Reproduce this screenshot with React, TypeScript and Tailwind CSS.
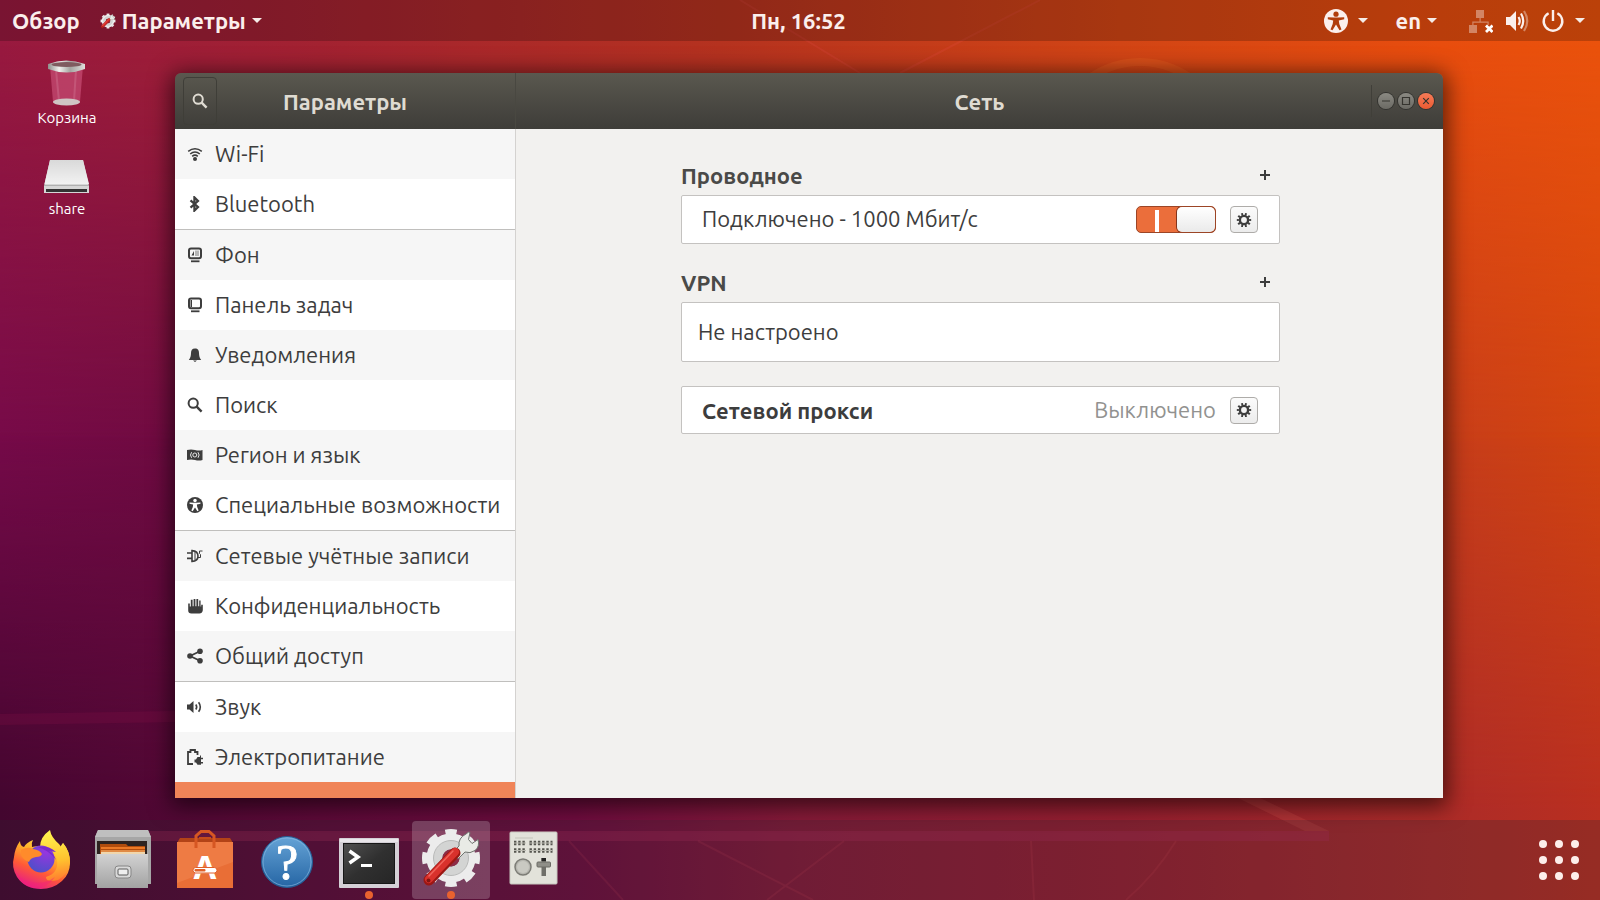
import { useState, type ReactNode } from "react";

type SidebarItem = {
  label: string;
  icon: ReactNode;
  shaded?: boolean;
  divider?: boolean;
};

function Glyph({ children }: { children: ReactNode }) {
  return (
    <svg viewBox="0 0 16 16" className="size-4 shrink-0" fill="currentColor" aria-hidden="true">
      {children}
    </svg>
  );
}

function SearchIcon() {
  return (
    <Glyph>
      <circle cx="6.2" cy="6.2" r="4.6" fill="none" stroke="currentColor" strokeWidth="2" />
      <path d="M9.4 9.4 14.6 14.6" stroke="currentColor" strokeWidth="2.4" />
    </Glyph>
  );
}

function Caret() {
  return (
    <svg viewBox="0 0 10 5" className="h-[5px] w-[10px] shrink-0" fill="#f5ece8" aria-hidden="true">
      <path d="M0 0h10L5 5z" />
    </svg>
  );
}

function GearIcon() {
  return (
    <Glyph>
      <circle cx="8" cy="8" r="4.1" fill="none" stroke="currentColor" strokeWidth="2.4" />
      <circle cx="8" cy="8" r="6" fill="none" stroke="currentColor" strokeWidth="2.4" pathLength="100" strokeDasharray="5 5" strokeDashoffset="2.5" />
    </Glyph>
  );
}

function ScreenFrame({ children }: { children: ReactNode }) {
  return (
    <Glyph>
      <rect x="2" y="1.5" width="12" height="9.8" rx="2" fill="none" stroke="currentColor" strokeWidth="2" />
      <rect x="4" y="13.4" width="8.5" height="1.8" />
      {children}
    </Glyph>
  );
}

function AccessIcon({ size, cut }: { size: string; cut: string }) {
  return (
    <svg viewBox="0 0 24 24" className={size} aria-hidden="true">
      <circle cx="12" cy="12" r="12" fill="currentColor" />
      <g className={cut}>
        <circle cx="12" cy="5.2" r="2.6" />
        <path d="M3.8 8.2 10 8.6h4l6.2-.4v2L14.8 11.4l.5 3.6 2.2 5.4-2 .8L12 15.6 8.5 21.2l-2-.8L8.7 15l.5-3.6-5.4-1.2z" />
      </g>
    </svg>
  );
}

const items: SidebarItem[] = [
  {
    label: "Wi-Fi",
    shaded: true,
    icon: (
      <Glyph>
        <g fill="none" stroke="currentColor" strokeWidth="1.6">
          <path d="M1.2 5.4Q8 .2 14.8 5.4" />
          <path d="M3.2 8Q8 4 12.8 8" />
          <path d="M5.2 10.4Q8 8 10.8 10.4" />
        </g>
        <circle cx="8" cy="13" r="2" />
      </Glyph>
    ),
  },
  {
    label: "Bluetooth",
    divider: true,
    icon: (
      <Glyph>
        <path d="M3.5 4.4 11 11 7.4 14.6V1.4L11 5 3.5 11.6" fill="none" stroke="currentColor" strokeWidth="2.2" />
      </Glyph>
    ),
  },
  {
    label: "Фон",
    shaded: true,
    icon: (
      <ScreenFrame>
        <path d="M4.5 8.5 7 4v4.5z" />
        <path d="M8 3.5h4V9H8z" opacity=".35" />
      </ScreenFrame>
    ),
  },
  {
    label: "Панель задач",
    icon: (
      <ScreenFrame>
        <rect x="3.5" y="3" width="1.5" height="7" />
      </ScreenFrame>
    ),
  },
  {
    label: "Уведомления",
    shaded: true,
    icon: (
      <Glyph>
        <path d="M8 1.5c3 0 4 2 4 4.5 0 3 .7 5 2.2 7H1.8C3.3 11 4 9 4 6c0-2.5 1-4.500 4-4.500zM6 13.500h4L8 15z" />
      </Glyph>
    ),
  },
  { label: "Поиск", icon: <SearchIcon /> },
  {
    label: "Регион и язык",
    shaded: true,
    icon: (
      <Glyph>
        <path d="M0 3q4-1 8 0t7.5 0v10q-3.5 1-7.5 0t-8 0z" />
        <g fill="none" stroke="#f7f7f7" strokeWidth=".9">
          <circle cx="7.8" cy="8" r="2" />
          <path d="M4.6 5.2q-2.2 2.8 0 5.6M11 5.2q2.2 2.8 0 5.6" />
        </g>
      </Glyph>
    ),
  },
  {
    label: "Специальные возможности",
    divider: true,
    icon: <AccessIcon size="size-4 shrink-0" cut="fill-white" />,
  },
  {
    label: "Сетевые учётные записи",
    shaded: true,
    icon: (
      <Glyph>
        <path d="M0 5h5M0 10.4h5" stroke="currentColor" strokeWidth="1.6" />
        <path d="M5 1.8v12.4M5 2.6q6 .4 6 5.4t-6 5.4" fill="none" stroke="currentColor" strokeWidth="1.6" />
        <path d="M8 4v8" stroke="currentColor" strokeWidth="1" />
        <path d="M11 9.5h2.5V6.500l-1-1V3h3" fill="none" stroke="currentColor" strokeWidth="1" />
      </Glyph>
    ),
  },
  {
    label: "Конфиденциальность",
    icon: (
      <Glyph>
        <path d="M1.2 5.4h1.6v3.2h1V1.8h1.8v6.4h1V1h1.8v7.2h1V1h1.800v7.2h1V2.4h1.400v6.2h.6V6.8h1.600v5.4q-.6 3.2-3.4 3.2H4.4q-3.200 0-3.200-3z" />
      </Glyph>
    ),
  },
  {
    label: "Общий доступ",
    shaded: true,
    divider: true,
    icon: (
      <Glyph>
        <path d="M13 3.2 3 8l10 4.8" fill="none" stroke="currentColor" strokeWidth="1.8" />
        <circle cx="3" cy="8" r="2.8" />
        <circle cx="13" cy="3.2" r="2.8" />
        <circle cx="13" cy="12.8" r="2.8" />
      </Glyph>
    ),
  },
  {
    label: "Звук",
    icon: (
      <Glyph>
        <path d="M0 5.5h2.5L6.5 2v12l-4-3.5H0z" />
        <path d="M8.8 5.5q1.8 2.5 0 5M11.6 3.2q3.4 4.8 0 9.6" fill="none" stroke="currentColor" strokeWidth="1.6" />
      </Glyph>
    ),
  },
  {
    label: "Электропитание",
    shaded: true,
    icon: (
      <Glyph>
        <path d="M6 15H1V3h2.500V1H8v2h2.500v3" fill="none" stroke="currentColor" strokeWidth="1.8" />
        <path d="M7.500 10.500H9L10.500 8H13V6.500h1v2.300h2v1.500h-2V13h2v1.500h-2v1.300h-3.500L9 13.500H7.500z" />
      </Glyph>
    ),
  },
];

function Wallpaper() {
  return (
    <svg viewBox="0 0 1600 900" preserveAspectRatio="none" className="absolute inset-0 -z-10 size-full" aria-hidden="true">
      <defs>
        <linearGradient id="skyTop">
          <stop offset="0" stopColor="#98193f" />
          <stop offset=".2" stopColor="#a32231" />
          <stop offset=".45" stopColor="#b5321f" />
          <stop offset=".7" stopColor="#d24515" />
          <stop offset=".9" stopColor="#e84d0e" />
          <stop offset="1" stopColor="#ea520c" />
        </linearGradient>
        <linearGradient id="skyMid">
          <stop offset="0" stopColor="#760a49" />
          <stop offset=".12" stopColor="#6e0b40" />
          <stop offset=".9" stopColor="#c63d1b" />
          <stop offset="1" stopColor="#d2440f" />
        </linearGradient>
        <linearGradient id="skyLow">
          <stop offset="0" stopColor="#43062f" />
          <stop offset=".2" stopColor="#5d0938" />
          <stop offset=".36" stopColor="#6e0c3e" />
          <stop offset=".5" stopColor="#861a38" />
          <stop offset=".7" stopColor="#981f30" />
          <stop offset=".87" stopColor="#a92a2a" />
          <stop offset="1" stopColor="#b92f20" />
        </linearGradient>
        <linearGradient id="fadeMid" x2="0" y2="1">
          <stop offset=".05" stopColor="#000" />
          <stop offset=".5" stopColor="#fff" />
        </linearGradient>
        <linearGradient id="fadeLow" x2="0" y2="1">
          <stop offset=".48" stopColor="#000" />
          <stop offset=".9" stopColor="#fff" />
        </linearGradient>
        <mask id="maskMid"><rect width="1600" height="900" fill="url(#fadeMid)" /></mask>
        <mask id="maskLow"><rect width="1600" height="900" fill="url(#fadeLow)" /></mask>
      </defs>
      <rect width="1600" height="900" fill="url(#skyTop)" />
      <rect width="1600" height="900" fill="url(#skyMid)" mask="url(#maskMid)" />
      <rect width="1600" height="900" fill="url(#skyLow)" mask="url(#maskLow)" />
      <path d="M0 714 175 711V722L0 725z" fill="#8d1048" opacity=".22" />
      <path d="M120 831H1329V841H120z" fill="#b82a5e" opacity=".32" />
      <path d="M1238 798h22l69 33h-24z" fill="#d0504c" opacity=".3" />
      <circle cx="1140" cy="150" r="88" fill="none" stroke="#f0702a" strokeWidth="8" opacity=".22" />
      <path d="M740 0 860 73M1040 0 900 73M569 841 623 900M698 841 813 900M844 841 767 900M1031 841 1034 900M1176 841Q1155 875 1126 900" fill="none" stroke="#ff5a6a" strokeWidth="2" opacity=".12" />
    </svg>
  );
}

function SettingsGear() {
  return (
    <>
      <circle cx="39" cy="37" r="18" fill="none" stroke="#ececec" strokeWidth="13" />
      <circle cx="39" cy="37" r="26" fill="none" stroke="#ececec" strokeWidth="6" pathLength="80" strokeDasharray="5.6 4.4" strokeDashoffset="2.8" />
      <circle cx="39" cy="37" r="13" fill="none" stroke="#d3d4d3" strokeWidth="9" />
      <circle cx="39" cy="37" r="17.5" fill="none" stroke="#b9bab9" strokeWidth="1" />
      <circle cx="39" cy="37" r="8.5" fill="#8d2c45" />
      <path d="M54 13q3-3 4-1.5l-1.5 7 3.5 4 6-4q2 7-3 11-5 3.5-10 1.500l-7 7-6-6 7-7q-1-8 7-12z" fill="#e9ebe6" stroke="#707570" strokeWidth="1" />
      <path d="M43 32 17 59" stroke="#9c1713" strokeWidth="11" strokeLinecap="round" />
      <path d="M43 31 17 58" stroke="#d9312c" strokeWidth="8" strokeLinecap="round" />
      <path d="M41 30 17 55" stroke="#f0635b" strokeWidth="1.5" strokeLinecap="round" />
      <circle cx="16.5" cy="59.5" r="2" fill="#7f1512" />
    </>
  );
}

function FirefoxArt() {
  return (
    <>
      <defs>
        <linearGradient id="foxBody" x1=".8" y1="0" x2=".3" y2="1">
          <stop offset="0" stopColor="#fff14a" />
          <stop offset=".35" stopColor="#ffb02a" />
          <stop offset=".65" stopColor="#ff5a36" />
          <stop offset="1" stopColor="#e5188c" />
        </linearGradient>
        <linearGradient id="foxFlame" x1=".5" y1="0" x2=".6" y2="1">
          <stop offset="0" stopColor="#fff44f" />
          <stop offset=".6" stopColor="#ffc22e" />
          <stop offset="1" stopColor="#ff7a30" />
        </linearGradient>
        <radialGradient id="foxGlobe" cx=".7" cy=".2" r=".9">
          <stop offset="0" stopColor="#9a35e0" />
          <stop offset="1" stopColor="#4b50c8" />
        </radialGradient>
      </defs>
      <path d="M18 20q0 5 4 6 2-4 9-7-2 3-1 7 6-2 12 1l16 0q1-3 3-5 7 8 7 19 0 12-8 19-9 8-21 8-16 0-24-12-6-10-3-20 1-9 6-16z" fill="url(#foxBody)" />
      <path d="M38 26Q38 16 48 9q1 7 9 14l3 4 1-5q7 9 7 20-2 11-12 17-12 3-12-3 13-4 11-17-3-12-17-13z" fill="url(#foxFlame)" />
      <circle cx="39" cy="38" r="13.5" fill="url(#foxGlobe)" />
      <path d="M36 26q10-2 18 5l-7-1q5 3 7 9-6-9-18-13z" fill="#7a2bcb" />
      <path d="M19 29q7-4 12-1 7 1 9 5-1 3-6 3-6 1-7 5-6-2-8-7z" fill="#ff8b2b" />
      <path d="M12 46q4 13 17 15 13 3 24-5-8 12-22 11-15-3-19-21z" fill="#f5217a" opacity=".45" />
    </>
  );
}

function FilesArt() {
  return (
    <>
      <defs>
        <linearGradient id="cabinet" x2="0" y2="1">
          <stop offset="0" stopColor="#d2d2d2" />
          <stop offset="1" stopColor="#a2a2a2" />
        </linearGradient>
      </defs>
      <path d="M14 9h50l3 7v47H11V16z" fill="#a6a6a6" />
      <path d="M14 9h50l3 7H11z" fill="#bfbfbf" />
      <rect x="13" y="20" width="50" height="16" fill="#2d2320" />
      <path d="M16 23h26l2 2h17v11H16z" fill="#b04c0d" />
      <rect x="17" y="26" width="44" height="2" fill="#ec7a26" />
      <rect x="17" y="29" width="44" height="2" fill="#e08a45" />
      <rect x="17" y="31" width="44" height="3" fill="#f0d6ac" />
      <path d="M13 33h51v34H13z" fill="url(#cabinet)" />
      <rect x="31" y="45" width="16" height="12" rx="3" fill="#d9d9d9" stroke="#868686" />
      <rect x="34" y="48" width="10" height="6" rx="1" fill="#eee" stroke="#5a5a5a" />
    </>
  );
}

function SoftwareArt() {
  return (
    <>
      <path d="M11 22 14 17H64l3 5z" fill="#b24317" />
      <path d="M11 21h56v46H11z" fill="#e96e36" />
      <path d="M11 21h56v20L11 62z" fill="#f2834f" opacity=".6" />
      <path d="M30 27V15l5-4.5h8L48 15v12" fill="none" stroke="#d65722" strokeWidth="3" />
      <path d="M33 17h12" stroke="#c54c1a" strokeWidth="2" />
      <text x="39" y="58" textAnchor="middle" fontSize="33" fontWeight="700" fill="#fff" className="font-['Noto_Sans',sans-serif]">A</text>
      <rect x="27" y="46.5" width="24" height="5.5" rx="2.7" fill="#fff" stroke="#e05f28" />
      <rect x="28.5" y="48" width="11" height="2.5" rx="1" fill="#e05f28" />
    </>
  );
}

function HelpArt() {
  return (
    <>
      <defs>
        <linearGradient id="helpBall" x2="0" y2="1">
          <stop offset="0" stopColor="#65a3d6" />
          <stop offset="1" stopColor="#2565a4" />
        </linearGradient>
      </defs>
      <circle cx="39" cy="41" r="25.5" fill="url(#helpBall)" stroke="#245b92" />
      <circle cx="39" cy="41" r="24" fill="none" stroke="#8dbde3" opacity=".6" />
      <text x="39" y="58" textAnchor="middle" fontSize="50" fill="#fff" stroke="#fff" className="font-['Liberation_Serif',serif]">?</text>
    </>
  );
}

function TerminalArt() {
  return (
    <>
      <defs>
        <linearGradient id="screenGlass" x2="1" y2="1">
          <stop offset="0" stopColor="#505050" />
          <stop offset=".5" stopColor="#303030" />
          <stop offset="1" stopColor="#262626" />
        </linearGradient>
      </defs>
      <rect x="9" y="17" width="60" height="50" rx="1" fill="#d4d0d6" />
      <rect x="10" y="18" width="58" height="3" fill="#e9e6ea" />
      <rect x="13.5" y="22.5" width="51" height="40" fill="url(#screenGlass)" stroke="#171717" />
      <path d="M19.5 30 28 36l-8.500 6" fill="none" stroke="#fff" strokeWidth="3.5" />
      <path d="M31 44.5h11" stroke="#fff" strokeWidth="3" />
    </>
  );
}

function TweaksArt() {
  return (
    <>
      <rect x="16" y="11" width="47" height="52" rx="1" fill="#e2e2da" stroke="#c7c7bf" />
      <path d="M21 17h18" stroke="#c4c4bb" strokeWidth="1" />
      <path d="M20 22h12M35.5 22h23M20 29.5h12M35.5 29.5h23" stroke="#55554f" strokeWidth="4.5" strokeDasharray="2.4 1.8" />
      <path d="M20 22h12M35.5 22h23M20 29.5h12M35.5 29.5h23" stroke="#b9b9b0" strokeWidth="1" />
      <circle cx="29" cy="46" r="8" fill="#b7b7b0" stroke="#7c7c76" strokeWidth="1.5" />
      <circle cx="29" cy="46" r="6" fill="#c9c9c2" />
      <rect x="47.5" y="37" width="4.5" height="18" fill="#6f6f69" />
      <rect x="47.5" y="37" width="4.5" height="3" fill="#222" />
      <rect x="43" y="41" width="13.5" height="5" rx="1" fill="#8f8f88" stroke="#6a6a64" />
    </>
  );
}

const dockApps = [
  { name: "Firefox", art: <FirefoxArt /> },
  { name: "Файлы", art: <FilesArt /> },
  { name: "Ubuntu Software", art: <SoftwareArt /> },
  { name: "Справка", art: <HelpArt /> },
  { name: "Терминал", art: <TerminalArt />, running: true },
  { name: "Параметры", art: <SettingsGear />, running: true, active: true },
  { name: "Доп. настройки", art: <TweaksArt /> },
];

function TopBar() {
  return (
    <header className="grid h-[41px] grid-cols-[1fr_auto_1fr] items-center bg-black/20 pr-[15px] pl-3 text-[22px] font-bold text-[#fbefec]">
      <div className="flex items-center gap-5">
        <button>Обзор</button>
        <button className="flex items-center gap-1.5">
          <svg viewBox="8 6 62 62" className="size-4" aria-hidden="true">
            <SettingsGear />
          </svg>
          <span>Параметры</span>
          <Caret />
        </button>
      </div>
      <button>Пн, 16:52</button>
      <div className="flex items-center justify-end">
        <button aria-label="Специальные возможности" className="flex items-center gap-2.5">
          <AccessIcon size="size-6" cut="fill-[#b13d0c]" />
          <Caret />
        </button>
        <button className="ml-[27px] flex items-center gap-1.5">
          <span>en</span>
          <Caret />
        </button>
        <button aria-label="Система" className="ml-8 flex items-center gap-2.5">
          <span className="flex items-center gap-3">
            <svg viewBox="0 0 24 24" className="size-6" aria-hidden="true">
              <g fill="#fbefec" opacity=".4">
                <path d="M7 1h8v8H7zM0 16h8v8H0zM10.5 9h1.200v3.500h8V16h-1.200v-2.300H4.500V16H3.300v-3.500h7.200z" />
              </g>
              <path d="m17 16.5 6.500 6.500m0-6.500L17 23" stroke="#fff" strokeWidth="2.8" />
            </svg>
            <svg viewBox="0 0 24 24" className="size-6" fill="none" aria-hidden="true">
              <path d="M1 8h4l6-6v20l-6-6H1z" fill="#fbefec" />
              <path d="M13.5 8q2.5 4 0 8M16 4.500q4.500 7.500 0 15" stroke="#fbefec" strokeWidth="2.2" />
              <path d="M19 2q6.500 10 0 20" stroke="#fbefec" strokeWidth="2.2" opacity=".4" />
            </svg>
            <svg viewBox="0 0 24 24" className="size-6" fill="none" stroke="#fbefec" strokeWidth="2.4" aria-hidden="true">
              <path d="M7.6 4.200a9.300 9.300 0 1 0 8.800 0M12 1v11" />
            </svg>
          </span>
          <Caret />
        </button>
      </div>
    </header>
  );
}

function DesktopIcons() {
  return (
    <aside className="flex w-[175px] shrink-0 flex-col gap-[21px] pt-[17px] text-[15px] leading-5 text-white [text-shadow:1px_1px_1px_#000]">
      <button className="flex w-[134px] flex-col items-center">
        <svg viewBox="0 0 50 50" className="size-[50px]" aria-hidden="true">
          <defs>
            <linearGradient id="binRim">
              <stop offset="0" stopColor="#8d8d8a" />
              <stop offset=".3" stopColor="#f1f1ee" />
              <stop offset=".6" stopColor="#a5a5a1" />
              <stop offset="1" stopColor="#dededb" />
            </linearGradient>
          </defs>
          <path d="M8 8h33l-3 36q-13 6-27 0z" fill="#d0567f" opacity=".6" />
          <path d="M14 12 17 43M34 12 32 43" stroke="#e39bb2" strokeWidth="2" opacity=".25" />
          <ellipse cx="24.5" cy="44" rx="13.5" ry="3.5" fill="#cfc5c4" />
          <path d="M6 6q18-7 37 0v5q-18 7-37 0z" fill="url(#binRim)" />
          <ellipse cx="24.5" cy="6.500" rx="15" ry="2.5" fill="#7f5b5f" />
        </svg>
        <span>Корзина</span>
      </button>
      <button className="flex w-[134px] flex-col items-center">
        <svg viewBox="0 0 50 50" className="size-[50px]" aria-hidden="true">
          <defs>
            <linearGradient id="driveTop" x2="0" y2="1">
              <stop offset="0" stopColor="#d9d9d9" />
              <stop offset="1" stopColor="#f2f2f2" />
            </linearGradient>
          </defs>
          <path d="M8 11h33l6 26v7H2v-7z" fill="#d6d6d6" />
          <path d="M8 11h33l6 24H2.500z" fill="url(#driveTop)" />
          <rect x="2" y="36" width="45" height="1" fill="#b0b0b0" />
          <rect x="4" y="40" width="41" height="3" fill="#333" />
        </svg>
        <span>share</span>
      </button>
    </aside>
  );
}

function Sidebar() {
  return (
    <nav className="flex w-[341px] shrink-0 flex-col overflow-hidden border-r border-[#d4d2d0] bg-white">
      {items.map((item) => (
        <button
          key={item.label}
          className={`flex shrink-0 items-center gap-3 pl-3 text-left text-[22px] whitespace-nowrap text-[#3d3d3d] ${item.divider ? "h-[51px] border-b border-b-[#c0bfbd]" : "h-[50px]"} ${item.shaded ? "bg-[#f6f6f6]" : "bg-white"}`}
        >
          {item.icon}
          <span className="pb-0.5">{item.label}</span>
        </button>
      ))}
      <button aria-label="Сеть" aria-current="page" className="min-h-4 flex-1 bg-[#f08458]" />
    </nav>
  );
}

function SectionTitle({ title }: { title: string }) {
  return (
    <div className="flex h-10 items-center justify-between pr-2.5">
      <h2 className="font-bold text-[#4a4a48]">{title}</h2>
      <button aria-label={`Добавить: ${title}`}>
        <svg viewBox="0 0 10 10" className="size-2.5" aria-hidden="true">
          <path d="M5 0v10M0 5h10" stroke="#3d3d3d" strokeWidth="2" />
        </svg>
      </button>
    </div>
  );
}

function GearButton({ label }: { label: string }) {
  return (
    <button aria-label={label} className="ml-3.5 flex h-[27px] w-7 items-center justify-center rounded border border-[#aeaca9] bg-linear-to-b from-[#fbfbfb] to-[#ececec] text-[#3d3d3d]">
      <GearIcon />
    </button>
  );
}

function NetworkPanel() {
  const [wired, setWired] = useState(true);
  return (
    <main className="flex-1 bg-[#f2f1ef] pt-[26px] pr-6 pl-[26px] text-[22px] text-[#3d3d3d]">
      <div className="mx-auto max-w-[599px]">
        <SectionTitle title="Проводное" />
        <div className="flex h-[49px] items-center rounded-xs border border-[#c4c2c0] bg-white pr-[21px] pl-5">
          <span className="flex-1 pb-0.5">Подключено - 1000 Мбит/с</span>
          <label className="relative flex h-[27px] w-20 cursor-pointer overflow-hidden rounded-[5px] border border-[#9c4526] bg-[#eb6e3b]">
            <input
              type="checkbox"
              role="switch"
              aria-label="Проводное подключение"
              checked={wired}
              onChange={(e) => setWired(e.target.checked)}
              className="absolute inset-0 size-full cursor-pointer opacity-0"
            />
            <span className="flex flex-1 justify-center pt-[3px]">
              <span className="w-1 bg-white" />
            </span>
            <span className="w-[38px] rounded-[5px] bg-linear-to-b from-white to-[#eaeaea] ring-1 ring-[#81351d]" />
          </label>
          <GearButton label="Параметры проводного подключения" />
        </div>
        <div className="mt-[18px]">
          <SectionTitle title="VPN" />
        </div>
        <div className="flex h-[60px] items-center rounded-xs border border-[#c4c2c0] bg-white px-4">
          <span className="pb-0.5">Не настроено</span>
        </div>
        <div className="mt-6 flex h-12 items-center rounded-xs border border-[#c4c2c0] bg-white pr-[21px] pl-5">
          <span className="flex-1 font-bold">Сетевой прокси</span>
          <span className="pb-0.5 text-[#929290]">Выключено</span>
          <GearButton label="Параметры прокси" />
        </div>
      </div>
    </main>
  );
}

function WindowButton({ label, close, children }: { label: string; close?: boolean; children: ReactNode }) {
  return (
    <button
      aria-label={label}
      className={`size-4 rounded-full ring-1 ring-[#33332f] ${close ? "bg-linear-to-b from-[#f77b57] to-[#ea5a31]" : "bg-linear-to-b from-[#8b8a83] to-[#6b6a64]"}`}
    >
      <svg viewBox="0 0 16 16" className="size-4" fill="none" stroke="#35342f" strokeWidth="1.2" aria-hidden="true">
        {children}
      </svg>
    </button>
  );
}

function SettingsWindow() {
  return (
    <section className="mr-[157px] flex min-h-0 min-w-0 flex-1 flex-col overflow-hidden rounded-t-md shadow-[0_4px_22px_4px_rgba(0,0,0,0.6)]">
      <div className="flex h-14 shrink-0 bg-linear-to-b from-[#5a584f] to-[#3e3d39] text-[22px] font-bold text-[#dfdbd2]">
        <div className="grid w-[341px] shrink-0 grid-cols-[34px_1fr_34px] items-center border-r border-[#494841] px-2">
          <button aria-label="Поиск" className="flex h-12 items-center justify-center rounded border border-[#3f3e38]">
            <SearchIcon />
          </button>
          <h1 className="text-center">Параметры</h1>
        </div>
        <div className="grid flex-1 grid-cols-[72px_1fr_72px] items-center">
          <h1 className="col-start-2 text-center">Сеть</h1>
          <div className="flex h-8 items-center gap-1 border-l border-[#403f39] pl-1.5">
            <WindowButton label="Свернуть">
              <path d="M4 8h8" />
            </WindowButton>
            <WindowButton label="Развернуть">
              <path d="M4.500 4.500h7v7h-7z" />
            </WindowButton>
            <WindowButton label="Закрыть" close>
              <path d="m5.200 5.200 5.600 5.600m0-5.600-5.600 5.600" />
            </WindowButton>
          </div>
        </div>
      </div>
      <div className="flex min-h-0 flex-1">
        <Sidebar />
        <NetworkPanel />
      </div>
    </section>
  );
}

function Dock() {
  return (
    <footer className="flex h-20 items-center justify-between bg-[#2e2430]/25 pr-[21px] pl-0.5">
      <div className="flex gap-1">
        {dockApps.map((app) => (
          <button key={app.name} aria-label={app.name} className={`relative size-[78px] rounded ${app.active ? "bg-white/20" : ""}`}>
            <svg viewBox="0 0 78 78" className="size-[78px]" aria-hidden="true">
              {app.art}
            </svg>
            {app.running && <span className="absolute bottom-0 left-1/2 size-2 -translate-x-1/2 rounded-full bg-[#e9622f]" />}
          </button>
        ))}
      </div>
      <button aria-label="Показать приложения" className="grid grid-cols-3 gap-2">
        {Array.from({ length: 9 }, (_, i) => (
          <span key={i} className="size-2 rounded-full bg-[#fdeeea]" />
        ))}
      </button>
    </footer>
  );
}

export default function App() {
  return (
    <div className="relative isolate flex h-screen flex-col overflow-hidden font-['Ubuntu','Noto_Sans','Open_Sans',sans-serif]">
      <Wallpaper />
      <TopBar />
      <div className="flex min-h-0 flex-1">
        <DesktopIcons />
        <div className="flex min-w-0 flex-1 pt-8 pb-[22px]">
          <SettingsWindow />
        </div>
      </div>
      <Dock />
    </div>
  );
}
